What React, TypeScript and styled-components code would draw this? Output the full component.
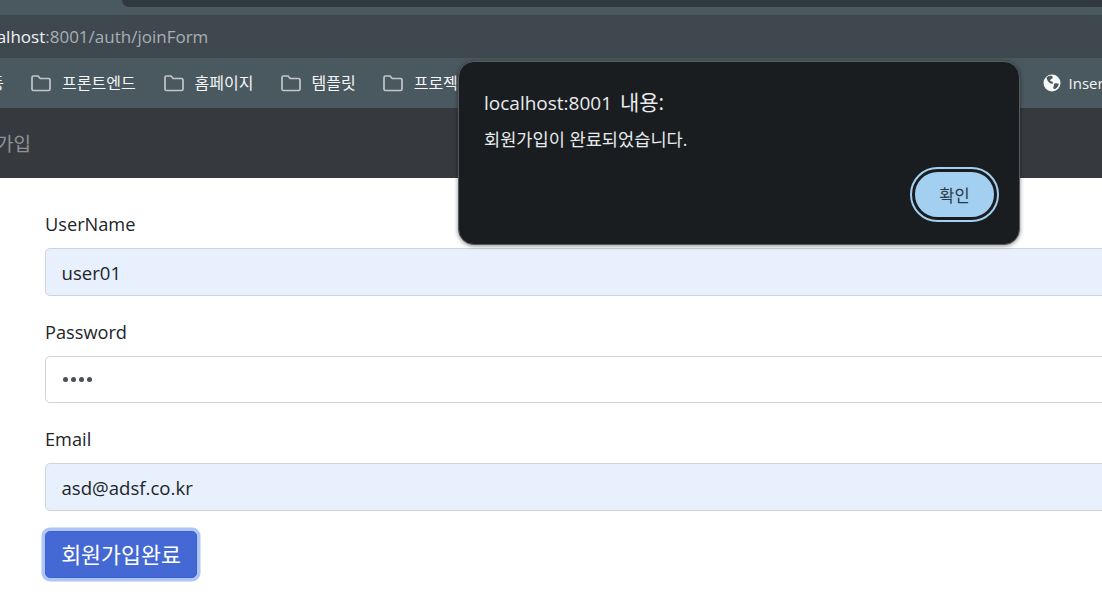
import styled, { createGlobalStyle } from "styled-components";

const GlobalStyle = createGlobalStyle`
  html, body {
    margin: 0;
    padding: 0;
    background: #fff;
  }
  body {
    width: 1102px;
    height: 596px;
    overflow: hidden;
    font-family: "Open Sans", "Noto Sans CJK KR", sans-serif;
  }
`;

const Page = styled.div`
  position: relative;
  width: 1102px;
  height: 596px;
  overflow: hidden;
`;

const TabStrip = styled.div`
  height: 15px;
  background: #4a5860;
`;

const ActiveTab = styled.div`
  height: 7px;
  margin-left: 122px;
  background: #32383f;
  border-bottom-left-radius: 10px;
`;

const AddressBar = styled.div`
  height: 43px;
  display: flex;
  align-items: center;
  overflow: hidden;
  background: #3f474f;
  font-size: 17px;
  color: #a9b0b5;
`;

const Host = styled.span`
  margin-left: -26px;
  color: #f2f4f5;
`;

const BookmarkBar = styled.div`
  height: 50px;
  display: flex;
  align-items: center;
  overflow: hidden;
  background: #4a5860;
  font-size: 16px;
  color: #f4f6f7;
`;

const CutLabel = styled.span`
  width: 4px;
  margin: -3px 27px 0 0;
  direction: rtl;
  overflow: hidden;
  white-space: nowrap;
`;

const Bookmark = styled.div<{ $gap: number }>`
  display: flex;
  align-items: center;
  gap: 10px;
  margin-right: ${(p) => p.$gap}px;
  white-space: nowrap;
`;

const BookmarkName = styled.span`
  margin: -3px 0 0 1px;
`;

const FolderIcon = () => (
  <svg width="20" height="17" viewBox="0 0 20 17" fill="none">
    <path
      d="M1 2.500C1 1.700 1.700 1 2.500 1H7l2.200 2.500h8.300c.8 0 1.500.7 1.500 1.500v9c0 .8-.7 1.500-1.500 1.500h-15C1.700 15.500 1 14.800 1 14V2.500Z"
      stroke="#c3c7ca"
      strokeWidth="1.7"
    />
  </svg>
);

const GlobeIcon = () => (
  <svg width="18" height="18" viewBox="0 0 18 18">
    <circle cx="9" cy="9" r="8.500" fill="#f7f8f8" />
    <path
      d="M3.500 3.500C5 2 7 1.500 9 2c.8.8.9 1.500.4 2.300-.6.800-1.800.8-2.200 1.700-.3.800.5 1.400 1.500 1.500 1 .2 1.600.8 1.200 1.700-.5 1-2.200.6-3.200-.2C5.500 7.800 4 6.500 3.500 3.500ZM11.500 9.500c1.300-.6 3-.4 4.300.3-.3 2.200-1.500 4-3.300 5-1.200.6-2 .3-2.200-.8-.2-1.100.5-1.700.6-2.600.1-.8-.2-1.400.6-1.900Z"
      fill="#4a5860"
    />
  </svg>
);

const RightBookmark = styled(Bookmark)`
  margin-left: auto;
  margin-right: -7px;
  gap: 8px;
  font-size: 15px;
`;

const NavBar = styled.div`
  height: 70px;
  display: flex;
  align-items: center;
  overflow: hidden;
  background: #363a3f;
  font-size: 19px;
  color: #8e9296;
`;

const Brand = styled.span`
  margin-left: -39px;
  white-space: nowrap;
`;

const Form = styled.form`
  display: flex;
  flex-direction: column;
  width: 1200px;
  padding: 34px 0 0 45px;
`;

const Label = styled.label`
  height: 24px;
  margin-bottom: 12px;
  line-height: 24px;
  font-size: 18.200px;
  color: #212529;
`;

const Field = styled.div<{ $filled?: boolean; $height: number }>`
  display: flex;
  align-items: center;
  box-sizing: border-box;
  height: ${(p) => p.$height}px;
  margin-bottom: 24px;
  padding-left: 15.500px;
  border: 1px solid #ced4da;
  border-radius: 5px;
  background: ${(p) => (p.$filled ? "#e8f0fe" : "#fff")};
  font-size: 18.600px;
  color: #212529;
`;

const Dots = styled.span`
  display: flex;
  gap: 3.300px;
  margin-left: 1px;
`;

const Dot = styled.i`
  width: 5px;
  height: 5px;
  border-radius: 50%;
  background: #495057;
`;

const SubmitButton = styled.button`
  align-self: flex-start;
  box-sizing: border-box;
  width: 152px;
  height: 47px;
  margin-top: -4px;
  padding: 0 0 2px;
  border: 1px solid #3f62c8;
  border-radius: 5px;
  background: #4469d4;
  box-shadow: 0 0 0 3.500px #aec5f8;
  font-family: "Noto Sans CJK KR", sans-serif;
  font-size: 21.700px;
  color: #fff;
`;

const Dialog = styled.div`
  position: absolute;
  left: 458px;
  top: 61px;
  box-sizing: border-box;
  width: 562px;
  height: 184px;
  padding: 27px 22px 0 25px;
  border-radius: 16px;
  background: #191d20;
  border: 1px solid #565b5f;
  box-shadow: 0 1px 4px rgba(0, 0, 0, 0.45);
`;

const DialogTitle = styled.div`
  height: 26px;
  line-height: 26px;
  font-size: 19px;
  word-spacing: 3px;
  color: #e8eaed;
`;

const TitleSuffix = styled.span`
  font-size: 21px;
`;

const DialogMessage = styled.div`
  margin-top: 12px;
  line-height: 24px;
  font-size: 17.600px;
  color: #e8eaed;
`;

const DialogActions = styled.div`
  display: flex;
  justify-content: flex-end;
  margin-top: 18px;
`;

const OkButton = styled.button`
  box-sizing: border-box;
  width: 85px;
  height: 51px;
  padding: 0;
  border: 3px solid #191d20;
  outline: 2.500px solid #a3cff0;
  outline-offset: -0.500px;
  border-radius: 26px;
  background: #a3cff0;
  font-family: "Noto Sans CJK KR", sans-serif;
  font-size: 16.500px;
  color: #2a3a45;
`;

const bookmarks = [
  { name: "프론트엔드", gap: 28 },
  { name: "홈페이지", gap: 27 },
  { name: "템플릿", gap: 27 },
  { name: "프로젝트", gap: 0 },
];

export default function App() {
  return (
    <Page>
      <GlobalStyle />
      <TabStrip>
        <ActiveTab />
      </TabStrip>
      <AddressBar>
        <Host>localhost</Host>:8001/auth/joinForm
      </AddressBar>
      <BookmarkBar>
        <CutLabel>등</CutLabel>
        {bookmarks.map((b) => (
          <Bookmark key={b.name} $gap={b.gap}>
            <FolderIcon />
            <BookmarkName>{b.name}</BookmarkName>
          </Bookmark>
        ))}
        <RightBookmark $gap={0}>
          <GlobeIcon />
          Insert
        </RightBookmark>
      </BookmarkBar>
      <NavBar>
        <Brand>회원가입</Brand>
      </NavBar>
      <Form>
        <Label>UserName</Label>
        <Field $filled $height={48}>user01</Field>
        <Label>Password</Label>
        <Field $height={47}>
          <Dots>
            <Dot />
            <Dot />
            <Dot />
            <Dot />
          </Dots>
        </Field>
        <Label>Email</Label>
        <Field $filled $height={48}>asd@adsf.co.kr</Field>
        <SubmitButton type="button">회원가입완료</SubmitButton>
      </Form>
      <Dialog>
        <DialogTitle>localhost:8001 <TitleSuffix>내용:</TitleSuffix></DialogTitle>
        <DialogMessage>회원가입이 완료되었습니다.</DialogMessage>
        <DialogActions>
          <OkButton type="button">확인</OkButton>
        </DialogActions>
      </Dialog>
    </Page>
  );
}
